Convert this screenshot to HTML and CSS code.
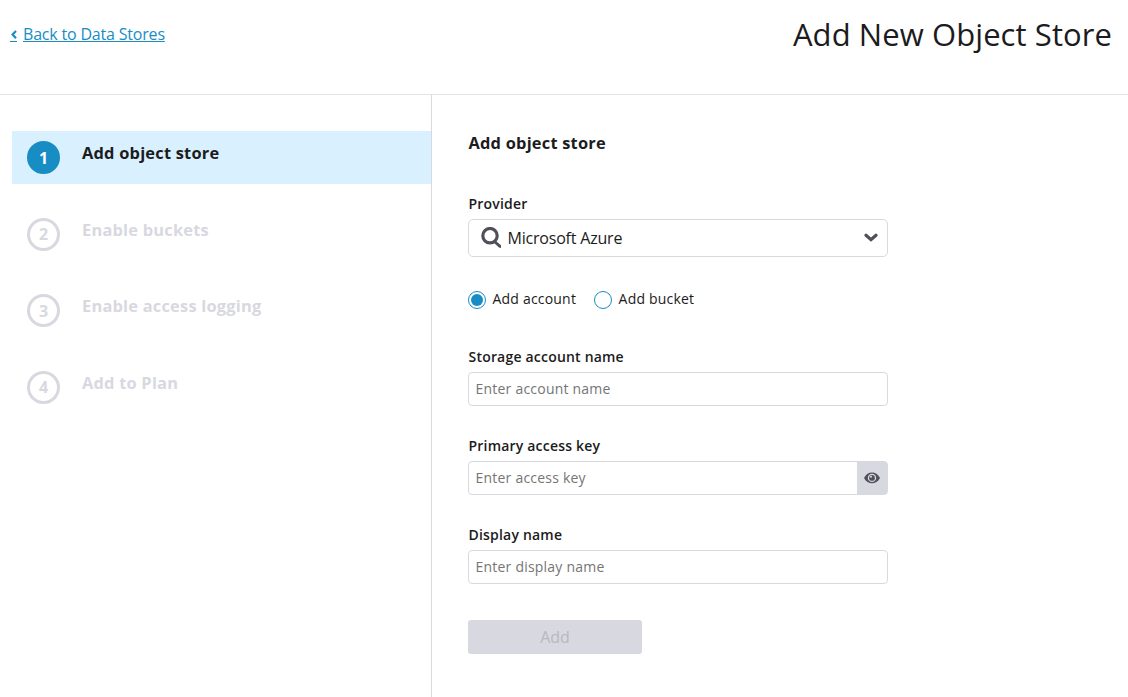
FILE: index.html
```html
<!DOCTYPE html>
<html lang="en">
<head>
<meta charset="utf-8">
<title>Add New Object Store</title>
<link rel="stylesheet" href="styles.css">
</head>
<body>
<header class="header">
  <a class="back" href="#"><svg class="back-icon" viewBox="0 0 7 9"><path d="M6 1 2.600 4.600 6 8.200" fill="none" stroke="currentColor" stroke-width="2.200"/></svg><span class="back-text">Back to Data Stores</span></a>
  <h1 class="title">Add New Object Store</h1>
</header>
<div class="body">
  <nav class="steps">
    <div class="step active"><span class="num">1</span><span class="step-name">Add object store</span></div>
    <div class="step"><span class="num">2</span><span class="step-name">Enable buckets</span></div>
    <div class="step"><span class="num">3</span><span class="step-name">Enable access logging</span></div>
    <div class="step"><span class="num">4</span><span class="step-name">Add to Plan</span></div>
  </nav>
  <main class="form">
    <h2 class="form-title">Add object store</h2>
    <div class="label provider-label">Provider</div>
    <div class="select">
      <svg class="search" viewBox="0 0 20 21"><circle cx="9" cy="8.700" r="7.200" fill="none" stroke="currentColor" stroke-width="3.200"/><path d="M13.200 12.600 20 18.300V21L18 20.500 12 15z" fill="currentColor"/></svg>
      <span class="select-value">Microsoft Azure</span>
      <svg class="chevron" viewBox="0 0 14 9"><path d="M2 2.200 7 6.600l5-4.400" fill="none" stroke="currentColor" stroke-width="3.200" stroke-linecap="round" stroke-linejoin="miter"/></svg>
    </div>
    <div class="radios">
      <label class="option"><span class="radio checked"></span>Add account</label>
      <label class="option"><span class="radio"></span>Add bucket</label>
    </div>
    <div class="label">Storage account name</div>
    <div class="field"><input class="input" placeholder="Enter account name"></div>
    <div class="label">Primary access key</div>
    <div class="field"><input class="input" placeholder="Enter access key"><span class="reveal"><svg class="eye" viewBox="0 0 16 12"><path fill-rule="evenodd" d="M0 6C2 2.200 4.800.6 8 .6S14 2.200 16 6c-2 3.800-4.800 5.200-8 5.200S2 9.800 0 6zM8 1.700a4.200 4.200 0 1 0 0 8.400 4.200 4.200 0 0 0 0-8.400z" fill="currentColor"/><circle cx="8" cy="5.900" r="2.900" fill="currentColor"/><circle cx="7" cy="4.800" r="1" fill="#d8d8e0"/></svg></span></div>
    <div class="label">Display name</div>
    <div class="field"><input class="input" placeholder="Enter display name"></div>
    <button class="add" disabled>Add</button>
  </main>
</div>
</body>
</html>
```
FILE: styles.css
```css
* { box-sizing: border-box; }
body {
  margin: 0;
  height: 697px;
  display: flex;
  flex-direction: column;
  overflow: hidden;
  background: #fff;
  color: #1b1b20;
  font-family: "Open Sans", sans-serif;
}
.header {
  height: 95px;
  flex: none;
  display: flex;
  justify-content: space-between;
  align-items: flex-start;
  padding: 12px 16px 0 10px;
  border-bottom: 1px solid #e1e1e8;
}
.back {
  display: flex;
  gap: 6px;
  margin-top: 11px;
  color: #178dc4;
  font-size: 16px;
  line-height: 22px;
  letter-spacing: -.190px;
  text-decoration: none;
}
.back-icon {
  width: 7px;
  height: 19px;
  padding: 7px 0 2px;
  border-bottom: 1px solid currentColor;
}
.back-text { text-decoration: underline; }
.title {
  margin: 0;
  font-size: 31px;
  font-weight: 400;
  line-height: 44px;
  letter-spacing: .080px;
}
.body { flex: 1; display: flex; }
.steps {
  width: 432px;
  padding: 36px 0 0 12px;
  border-right: 1px solid #d8d8e0;
}
.step {
  height: 53px;
  margin-bottom: 23.600px;
  display: flex;
  gap: 22px;
  padding: 10px 0 0 15px;
  color: #d8d8e0;
  font-size: 16px;
  font-weight: 700;
}
.step.active { background: #d9f0ff; }
.num {
  width: 33px;
  height: 33px;
  display: grid;
  place-items: center;
  border: 3px solid #d8d8e0;
  border-radius: 50%;
  line-height: 22px;
}
.active .num { background: #178dc4; border-color: #178dc4; color: #fff; }
.step-name { margin-top: 1px; font-size: 16.400px; line-height: 22px; letter-spacing: .220px; }
.active .step-name { color: #1b1b20; }
.form {
  width: 456px;
  padding: 37px 0 0 36px;
}
.form-title {
  margin: 0 0 39px;
  padding-left: .500px;
  font-size: 16.400px;
  font-weight: 700;
  line-height: 22px;
  letter-spacing: .220px;
}
.label {
  height: 25px;
  padding-left: .500px;
  font-size: 14px;
  font-weight: 600;
  line-height: 20px;
  letter-spacing: .200px;
}
.provider-label { height: 26px; padding-top: 1px; }
.select {
  height: 38px;
  display: flex;
  align-items: center;
  padding: 0 9px 0 12px;
  border: 1px solid #d8d8e0;
  border-radius: 5px;
  font-size: 16px;
  letter-spacing: -.200px;
  color: #50505a;
}
.search { width: 20px; height: 21px; margin-bottom: 1px; }
.select-value { margin-left: 6.500px; flex: 1; color: #1b1b20; }
.chevron { width: 14px; height: 9px; margin-bottom: 1px; }
.radios {
  display: flex;
  gap: 18px;
  margin: 32px 0 38px;
  height: 20px;
  font-size: 14px;
  line-height: 20px;
  letter-spacing: .200px;
}
.option { display: flex; gap: 6.500px; }
.radio {
  width: 18px;
  height: 18px;
  margin-top: 2px;
  border: 1px solid #178dc4;
  border-radius: 50%;
  display: grid;
  place-items: center;
}
.checked::after {
  content: "";
  width: 12px;
  height: 12px;
  border-radius: 50%;
  background: #178dc4;
}
.field {
  display: flex;
  height: 34px;
  margin-bottom: 30px;
  border: 1px solid #d8d8e0;
  border-radius: 4px;
}
.input {
  flex: 1;
  min-width: 0;
  padding: 0 6.500px 2px;
  border: 0;
  outline: 0;
  background: none;
  font: 14px "Open Sans", sans-serif;
  letter-spacing: .220px;
}
.input::placeholder { color: #757575; }
.reveal {
  width: 30px;
  display: grid;
  place-items: center;
  background: #d8d8e0;
  color: #50505a;
}
.eye { width: 16px; height: 12px; }
.add {
  width: 174px;
  height: 34px;
  margin-top: 6px;
  border: 0;
  border-radius: 3px;
  background: #d8d8e0;
  color: #b8b8bf;
  font: 16px "Open Sans", sans-serif;
}
```
